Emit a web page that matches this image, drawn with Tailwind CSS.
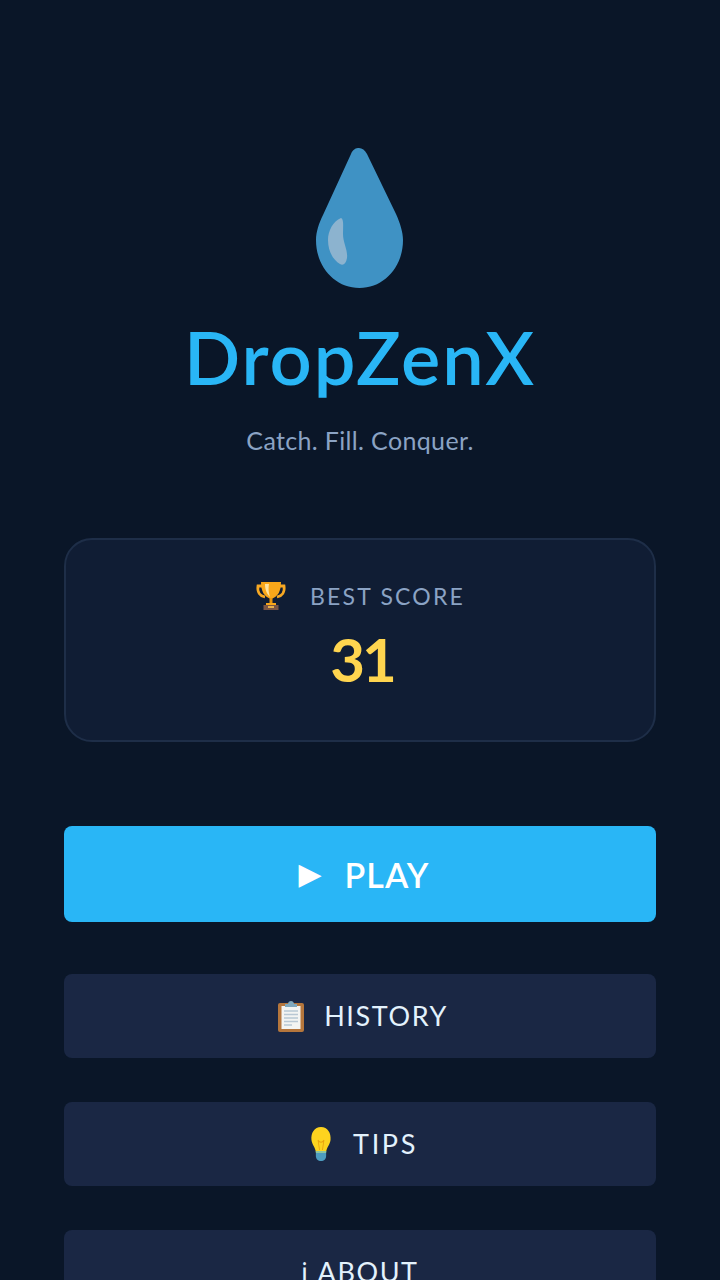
<!DOCTYPE html>
<html lang="en">

<head>
  <meta charset="UTF-8" />
  <meta name="viewport" content="width=device-width, initial-scale=1.0" />
  <title>DropZenX</title>
  <script src="https://cdn.jsdelivr.net/npm/@tailwindcss/browser@4"></script>
</head>

<body class="bg-[#0a1628] font-['Lato','Noto_Sans',sans-serif]">
  <div class="h-[1280px] overflow-hidden px-16 pt-[148px] flex flex-col items-center">

    <!-- Logo -->
    <svg class="block shrink-0" width="88" height="140" viewBox="0 0 88 140">
      <path d="M35 6 C37 1 40 0 43 0 C46 0 49 2 51 6 L80 66 C84 75 87 84 87 92 C87 119 68 140 43.5 140 C19 140 0 119 0 92 C0 84 3 75 7 67 Z" fill="#3f92c4" />
      <path d="M25 70 C28 71 27 78 27 86 C27 95 32 102 31 110 C30 116 27 118 24 116 C17 112 12 103 12 92 C12 83 17 73 25 70 Z" fill="#8cb3cf" />
    </svg>

    <!-- Title -->
    <h1 class="mt-[26px] h-[86px] shrink-0 text-[74px] leading-[86px] font-semibold tracking-[2px] text-[#29b6f6]">DropZenX</h1>
    <p class="mt-[22px] shrink-0 text-[25px] leading-[36px] tracking-[0.35px] text-[#8ba3c4]">Catch. Fill. Conquer.</p>

    <!-- Best score -->
    <div class="mt-[80px] w-full h-[204px] shrink-0 rounded-[28px] border-2 border-[#1e2e48] bg-[#101d34] flex flex-col items-center pt-[36px]">
      <div class="flex items-center gap-[23px] h-[40px]">
        <svg width="32" height="30" viewBox="0 0 32 30">
          <path d="M8 5 H3 C2 11 5 15 10 16 M24 5 H29 C30 11 27 15 22 16" fill="none" stroke="#f7a823" stroke-width="2.8" />
          <path d="M6 1 H26 C26 10 23 16 16 18 C9 16 6 10 6 1 Z" fill="#f9a71a" />
          <path d="M10 3 H14 C13 9 14 12 15 16 C12 13 10 9 10 3 Z" fill="#fde3a0" />
          <rect x="14.5" y="17" width="3" height="6" fill="#e8940f" />
          <rect x="11" y="22" width="10" height="2" fill="#f9a71a" />
          <rect x="8.5" y="24" width="15" height="5" fill="#7b5544" />
          <rect x="13" y="25" width="6" height="2" fill="#e8b04a" />
        </svg>
        <span class="text-[23px] leading-[40px] tracking-[2.2px] text-[#8ba3c4]">BEST SCORE</span>
      </div>
      <div class="mt-[10px] pl-[4px] text-[60px] leading-[66px] font-bold tracking-[-3px] text-[#ffd54f]">31</div>
    </div>

    <!-- Buttons -->
    <button class="mt-[84px] w-full h-[96px] shrink-0 rounded-lg bg-[#29b6f6] flex items-center justify-center gap-[23px] pl-[8px] text-white">
      <span class="font-['DejaVu_Sans',sans-serif] text-[30px] leading-none">▶</span>
      <span class="text-[34px] font-semibold tracking-[1px]">PLAY</span>
    </button>

    <button class="mt-[52px] w-full h-[84px] shrink-0 rounded-lg bg-[#1a2744] flex items-center justify-center gap-[17px] pl-[3px] text-[#e3f2fd]">
      <svg width="32" height="32" viewBox="0 0 32 32">
        <rect x="3" y="3" width="26" height="29" rx="2" fill="#b5763c" />
        <rect x="6.5" y="6" width="19" height="23" fill="#f3f4f2" />
        <path d="M9 11 H23 M9 14.5 H23 M9 18 H23 M9 21.5 H23 M9 25 H17" stroke="#b8c7d3" stroke-width="1.4" />
        <path d="M10 7 V4 H13 C13 0 19 0 19 4 H22 V7 Z" fill="#7fa8bd" />
      </svg>
      <span class="text-[27px] tracking-[1.6px]">HISTORY</span>
    </button>

    <button class="mt-[44px] w-full h-[84px] shrink-0 rounded-lg bg-[#1a2744] flex items-center justify-center gap-[21px] pl-[8px] text-[#e3f2fd]">
      <svg width="22" height="34" viewBox="0 0 30 34" preserveAspectRatio="none">
        <path d="M15 0 C24 0 29 6 28 13 C27 18 23 20 22 25 H8 C7 20 3 18 2 13 C1 6 6 0 15 0 Z" fill="#fdd31f" />
        <path d="M11 13 L13 23 M19 13 L17 23 M11 13 C13 16 17 16 19 13" fill="none" stroke="#e9a20d" stroke-width="1.2" />
        <path d="M8 24 H22 V29 C22 32 19 34 15 34 C11 34 8 32 8 29 Z" fill="#4d9cc0" />
        <path d="M8 24 H22 V26 H8 Z" fill="#8cc6a0" />
      </svg>
      <span class="text-[27px] tracking-[2.6px]">TIPS</span>
    </button>

    <button class="mt-[44px] w-full h-[84px] shrink-0 rounded-lg bg-[#1a2744] flex items-center justify-center text-[#e3f2fd]">
      <span class="text-[27px] tracking-[1.6px]">ℹ ABOUT</span>
    </button>
  </div>
</body>

</html>
